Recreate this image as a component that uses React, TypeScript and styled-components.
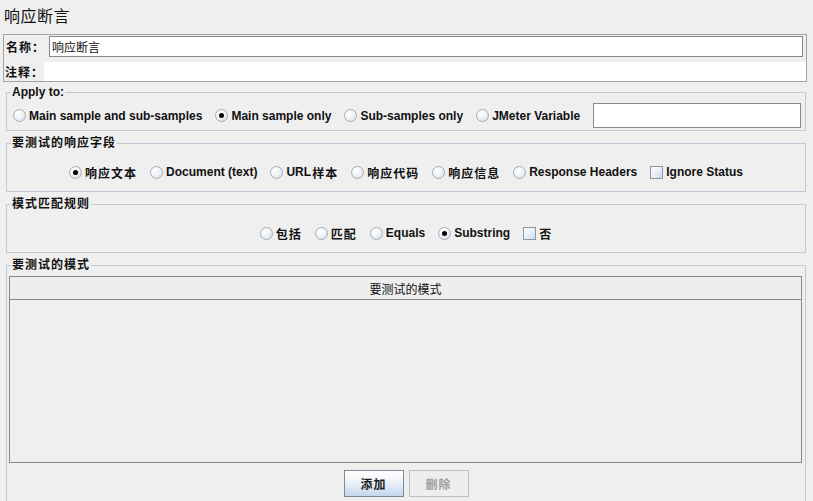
import React from 'react';
import styled, { createGlobalStyle } from 'styled-components';

const colors = {
  bg: '#efefef',
  frame: '#bfcad7',
  panel: '#a2a2a2',
  field: '#858a91',
  text: '#111111',
  dim: '#a0a0a0'
};

const GlobalStyle = createGlobalStyle`
  html, body {
    margin: 0;
    padding: 0;
    background: ${colors.bg};
    overflow: hidden;
  }
  body {
    font-family: "Liberation Sans", "Noto Sans CJK SC", sans-serif;
    font-size: 12px;
    color: ${colors.text};
  }
`;

const Page = styled.div`
  height: 501px;
  display: flex;
  flex-direction: column;
  overflow: hidden;

  & > * {
    flex-shrink: 0;
  }
`;

const Title = styled.h1`
  margin: 0;
  height: 34px;
  box-sizing: border-box;
  padding: 7px 0 0 4px;
  font-size: 16px;
  font-weight: normal;
  line-height: 20px;
  letter-spacing: 0.5px;
`;

// 名称 / 注释 block
const NamePanel = styled.div`
  margin: 0 6px 0 3px;
  height: 48px;
  box-sizing: border-box;
  border: 1px solid ${colors.panel};
  padding-top: 1px;
  display: flex;
  flex-direction: column;
  gap: 5px;
`;

const FieldRow = styled.div<{ $inset: number }>`
  display: flex;
  align-items: center;
  padding-left: ${({ $inset }) => $inset}px;
`;

const RowLabel = styled.label<{ $width: number }>`
  flex: none;
  width: ${({ $width }) => $width}px;
  font-weight: bold;
  letter-spacing: 1px;
  white-space: nowrap;
`;

const TextInput = styled.input<{ $bare?: boolean; $height: number }>`
  flex: 1;
  min-width: 0;
  height: ${({ $height }) => $height}px;
  box-sizing: border-box;
  margin: 0 ${({ $bare }) => ($bare ? 0 : 3)}px 0 0;
  padding: 0 2px;
  border: ${({ $bare }) => ($bare ? 'none' : `1px solid ${colors.field}`)};
  background: #ffffff;
  font-family: inherit;
  font-size: 12px;
  color: ${colors.text};
  outline: none;
`;

// titled groups
const Group = styled.fieldset<{ $top: number; $bottom?: number }>`
  margin: ${({ $top }) => $top}px 7px 0 6px;
  padding: 0 0 ${({ $bottom }) => $bottom ?? 0}px 0;
  border: 1px solid ${colors.frame};
  min-width: 0;
`;

const Legend = styled.legend`
  margin-left: 4px;
  padding: 0 1px;
  font-weight: bold;
  font-size: 12px;
  line-height: 14px;
`;

const Cjk = styled.span<{ $tight?: boolean }>`
  letter-spacing: 1px;
  margin-left: ${({ $tight }) => ($tight ? -2 : 0)}px;
`;

const ApplyRow = styled.div`
  display: flex;
  align-items: center;
  gap: 13px;
  padding: 4px 4px 2px 6px;
`;

const ChoiceRow = styled.div`
  display: flex;
  align-items: center;
  justify-content: center;
  gap: 13px;
  height: 20px;
  padding: 12px 0 9px;
`;

const Option = styled.label`
  display: inline-flex;
  align-items: center;
  gap: 3px;
  height: 20px;
  font-weight: bold;
  white-space: nowrap;
`;

const Radio = styled.span<{ $on?: boolean }>`
  position: relative;
  flex: none;
  width: 13px;
  height: 13px;
  box-sizing: border-box;
  border-radius: 50%;
  border: 1px solid #a3adba;
  background: radial-gradient(circle at 35% 30%, #ffffff 0%, #f1f3f6 45%, #d3dae3 100%);

  &::after {
    content: '';
    display: ${({ $on }) => ($on ? 'block' : 'none')};
    position: absolute;
    left: 3px;
    top: 3px;
    width: 5px;
    height: 5px;
    border-radius: 50%;
    background: #000000;
  }
`;

const Check = styled.span`
  flex: none;
  width: 13px;
  height: 13px;
  box-sizing: border-box;
  border: 1px solid #8896a8;
  background: linear-gradient(135deg, #ffffff 0%, #e6edf5 55%, #c8d7e9 100%);
`;

const VarInput = styled.input`
  flex: 1;
  min-width: 0;
  height: 25px;
  box-sizing: border-box;
  margin: 0;
  padding: 0 3px;
  border: 1px solid ${colors.field};
  background: #ffffff;
  font-family: inherit;
  font-size: 12px;
  outline: none;
`;

// pattern table
const Table = styled.div`
  margin: 4px 3px 0 2px;
  height: 187px;
  box-sizing: border-box;
  border: 1px solid ${colors.field};
  display: flex;
  flex-direction: column;
`;

const TableHeader = styled.div`
  height: 22px;
  flex: none;
  display: flex;
  align-items: center;
  justify-content: center;
  border-bottom: 1px solid ${colors.field};
  background: #eeeeee;
  font-size: 12px;
`;

const TableBody = styled.div`
  flex: 1;
  background: ${colors.bg};
`;

const ButtonRow = styled.div`
  display: flex;
  justify-content: center;
  gap: 5px;
  padding-top: 7px;
`;

const ActionButton = styled.button<{ $primary?: boolean }>`
  width: 60px;
  height: 27px;
  box-sizing: border-box;
  padding: 0;
  font-family: inherit;
  font-size: 12px;
  font-weight: bold;
  letter-spacing: 1px;
  border: 1px solid ${({ $primary }) => ($primary ? '#7a8a99' : '#b9bfc6')};
  background: ${({ $primary }) =>
    $primary ? 'linear-gradient(#ffffff 0%, #f3f6fa 35%, #c4d7ee 100%)' : '#eeeeee'};
  color: ${({ disabled }) => (disabled ? colors.dim : '#1c1c1c')};
`;

type Choice = { label: React.ReactNode; on?: boolean; check?: boolean };

const applyChoices: Choice[] = [
  { label: 'Main sample and sub-samples' },
  { label: 'Main sample only', on: true },
  { label: 'Sub-samples only' },
  { label: 'JMeter Variable' }
];

const fieldChoices: Choice[] = [
  { label: <Cjk>响应文本</Cjk>, on: true },
  { label: 'Document (text)' },
  { label: <>URL<Cjk $tight>样本</Cjk></> },
  { label: <Cjk>响应代码</Cjk> },
  { label: <Cjk>响应信息</Cjk> },
  { label: 'Response Headers' },
  { label: 'Ignore Status', check: true }
];

const ruleChoices: Choice[] = [
  { label: <Cjk>包括</Cjk> },
  { label: <Cjk>匹配</Cjk> },
  { label: 'Equals' },
  { label: 'Substring', on: true },
  { label: <Cjk>否</Cjk>, check: true }
];

const Choices = ({ items }: { items: Choice[] }) => (
  <>
    {items.map((item, i) => (
      <Option key={i}>
        {item.check ? <Check /> : <Radio $on={item.on} />}
        {item.label}
      </Option>
    ))}
  </>
);

export default function App() {
  return (
    <Page>
      <GlobalStyle />
      <Title>响应断言</Title>

      <NamePanel>
        <FieldRow $inset={2}>
          <RowLabel $width={43}>名称：</RowLabel>
          <TextInput $height={21} defaultValue="响应断言" readOnly />
        </FieldRow>
        <FieldRow $inset={1}>
          <RowLabel $width={39}>注释：</RowLabel>
          <TextInput $bare $height={19} defaultValue="" readOnly />
        </FieldRow>
      </NamePanel>

      <Group $top={3}>
        <Legend>Apply to:</Legend>
        <ApplyRow>
          <Choices items={applyChoices} />
          <VarInput defaultValue="" readOnly />
        </ApplyRow>
      </Group>

      <Group $top={5}>
        <Legend><Cjk>要测试的响应字段</Cjk></Legend>
        <ChoiceRow>
          <Choices items={fieldChoices} />
        </ChoiceRow>
      </Group>

      <Group $top={5}>
        <Legend><Cjk>模式匹配规则</Cjk></Legend>
        <ChoiceRow>
          <Choices items={ruleChoices} />
        </ChoiceRow>
      </Group>

      <Group $top={5} $bottom={20}>
        <Legend><Cjk>要测试的模式</Cjk></Legend>
        <Table>
          <TableHeader>要测试的模式</TableHeader>
          <TableBody />
        </Table>
        <ButtonRow>
          <ActionButton $primary>添加</ActionButton>
          <ActionButton disabled>删除</ActionButton>
        </ButtonRow>
      </Group>
    </Page>
  );
}
